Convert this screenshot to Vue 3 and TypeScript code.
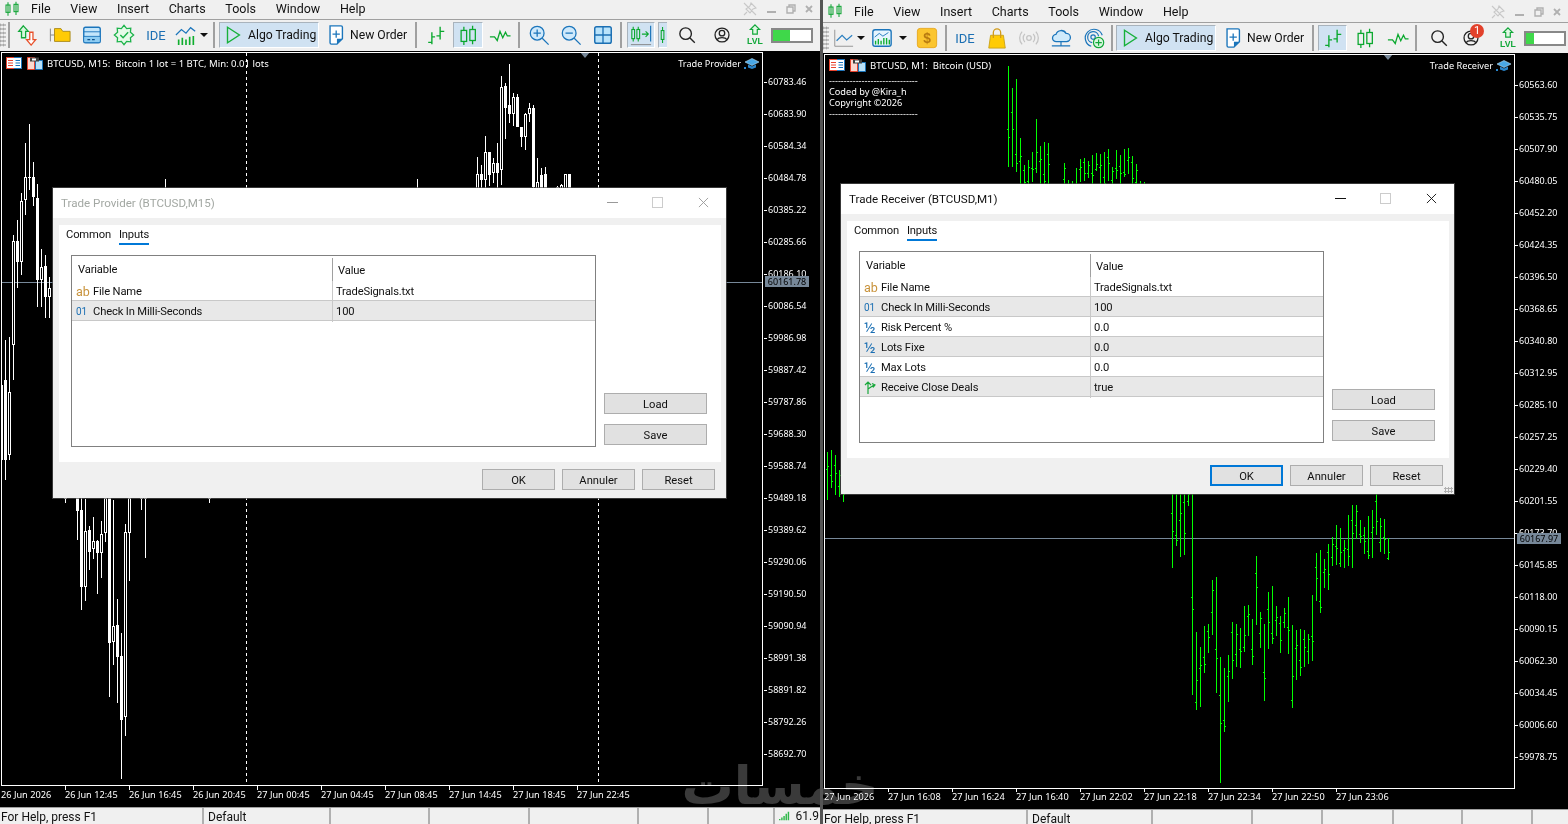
<script setup lang="ts">
type Tool = { k: string; w: number; id?: string; on?: boolean; pct?: number; badge?: boolean };
type Candle = [number, number, number, number, number, number];
type Win = {
  cls: string; title: string; tip: string; ea: string; notes: string[]; tools: Tool[];
  prices: string[]; times: string[]; stat: number[]; dlg: string; rows: string[][]; tag: string;
};

const menus = ['File', 'View', 'Insert', 'Charts', 'Tools', 'Window', 'Help'];

const leftTools: Tool[] = [
  { k: 'grip', w: 6 }, { k: 'sep', w: 5 },
  { k: 'use', id: 'arrows', w: 32 }, { k: 'gap', w: 1 }, { k: 'use', id: 'folder', w: 32 }, { k: 'use', id: 'win', w: 32 },
  { k: 'use', id: 'gear', w: 32 }, { k: 'ide', w: 32 }, { k: 'use', id: 'chart', w: 28 }, { k: 'dd', w: 8 },
  { k: 'sep', w: 11 }, { k: 'algo', w: 100 }, { k: 'gap', w: 6 }, { k: 'order', w: 88 }, { k: 'sep', w: 6 },
  { k: 'use', id: 'bars', w: 34 }, { k: 'use', id: 'candles', w: 30, on: true }, { k: 'use', id: 'line', w: 34 }, { k: 'sep', w: 4 }, { k: 'gap', w: 1 },
  { k: 'use', id: 'zin', w: 33 }, { k: 'use', id: 'zout', w: 32 }, { k: 'use', id: 'grid', w: 32 }, { k: 'sep', w: 4 }, { k: 'gap', w: 4 },
  { k: 'use', id: 'auto', w: 28, on: true }, { k: 'gap', w: 3 }, { k: 'part', w: 9, on: true }, { k: 'gap', w: 4 },
  { k: 'use', id: 'search', w: 32 }, { k: 'gap', w: 3 }, { k: 'use', id: 'user', w: 32 }, { k: 'gap', w: 1 }, { k: 'use', id: 'lvl', w: 32 },
  { k: 'prog', w: 42, pct: 45 },
];
const rightTools: Tool[] = [
  { k: 'grip', w: 6 }, { k: 'use', id: 'lchart', w: 27 }, { k: 'dd', w: 10 }, { k: 'use', id: 'cbox', w: 32 }, { k: 'dd', w: 10 }, { k: 'gap', w: 2 },
  { k: 'use', id: 'dollar', w: 34 }, { k: 'sep', w: 3 }, { k: 'gap', w: 1 }, { k: 'ide', w: 34 }, { k: 'use', id: 'bag', w: 30 }, { k: 'gap', w: 1 },
  { k: 'use', id: 'signal', w: 32 }, { k: 'use', id: 'cloud', w: 32 }, { k: 'use', id: 'network', w: 33 }, { k: 'sep', w: 3 }, { k: 'gap', w: 3 },
  { k: 'algo', w: 100 }, { k: 'gap', w: 6 }, { k: 'order', w: 88 }, { k: 'sep', w: 6 }, { k: 'gap', w: 2 },
  { k: 'use', id: 'bars', w: 29, on: true }, { k: 'gap', w: 1 }, { k: 'use', id: 'candles', w: 34 }, { k: 'use', id: 'line', w: 32 }, { k: 'sep', w: 3 }, { k: 'gap', w: 5 },
  { k: 'use', id: 'search', w: 33 }, { k: 'use', id: 'user', w: 31, badge: true }, { k: 'gap', w: 5 }, { k: 'use', id: 'lvl', w: 33 },
  { k: 'prog', w: 42, pct: 20 },
];

const windows: Win[] = [
  {
    cls: 'w-left', title: 'Trade Provider (BTCUSD,M15)', tip: 'BTCUSD, M15:  Bitcoin 1 lot = 1 BTC, Min: 0.01 lots', ea: 'Trade Provider',
    notes: [], tools: leftTools, tag: '60161.78', dlg: 'd-left',
    prices: ['60783.46', '60683.90', '60584.34', '60484.78', '60385.22', '60285.66', '60186.10', '60086.54', '59986.98', '59887.42', '59787.86', '59688.30', '59588.74', '59489.18', '59389.62', '59290.06', '59190.50', '59090.94', '58991.38', '58891.82', '58792.26', '58692.70'],
    times: ['26 Jun 2026', '26 Jun 12:45', '26 Jun 16:45', '26 Jun 20:45', '27 Jun 00:45', '27 Jun 04:45', '27 Jun 08:45', '27 Jun 14:45', '27 Jun 18:45', '27 Jun 22:45'],
    stat: [204, 127, 99, 100, 109, 70, 66],
    rows: [['ab', 'File Name', 'TradeSignals.txt'], ['01', 'Check In Milli-Seconds', '100']],
  },
  {
    cls: 'w-right', title: 'Trade Receiver (BTCUSD,M1)', tip: 'BTCUSD, M1:  Bitcoin (USD)', ea: 'Trade Receiver',
    notes: ['------------------------------', 'Coded by @Kira_h', 'Copyright ©2026', '------------------------------'], tools: rightTools, tag: '60167.97', dlg: 'd-right',
    prices: ['60563.60', '60535.75', '60507.90', '60480.05', '60452.20', '60424.35', '60396.50', '60368.65', '60340.80', '60312.95', '60285.10', '60257.25', '60229.40', '60201.55', '60173.70', '60145.85', '60118.00', '60090.15', '60062.30', '60034.45', '60006.60', '59978.75'],
    times: ['27 Jun 2026', '27 Jun 16:08', '27 Jun 16:24', '27 Jun 16:40', '27 Jun 22:02', '27 Jun 22:18', '27 Jun 22:34', '27 Jun 22:50', '27 Jun 23:06'],
    stat: [205, 125, 100, 70, 71, 69, 70],
    rows: [['ab', 'File Name', 'TradeSignals.txt'], ['01', 'Check In Milli-Seconds', '100'], ['½', 'Risk Percent %', '0.0'], ['½', 'Lots Fixe', '0.0'], ['½', 'Max Lots', '0.0'], ['→', 'Receive Close Deals', 'true']],
  },
];

const candles: Candle[] = [
  [1, 370, 470, 385, 460, 1], [5, 340, 480, 380, 460, 1], [9, 337, 460, 392, 455, 0], [13, 235, 380, 241, 345, 0], [17, 220, 288, 241, 262, 1],
  [21, 193, 275, 201, 262, 0], [25, 143, 215, 177, 200, 0], [29, 124, 190, 177, 178, 1], [33, 162, 206, 177, 197, 1],
  [37, 184, 307, 198, 280, 1], [41, 249, 307, 267, 280, 0], [45, 255, 318, 266, 297, 1], [49, 277, 318, 288, 297, 0],
  [77, 495, 540, 496, 511, 1], [81, 498, 610, 510, 587, 1], [85, 499, 601, 531, 587, 0], [89, 526, 570, 530, 552, 1],
  [93, 517, 559, 541, 549, 0], [97, 540, 594, 541, 553, 1], [101, 521, 578, 534, 553, 0], [105, 498, 542, 498, 533, 0],
  [109, 498, 697, 498, 643, 1], [113, 500, 665, 626, 642, 0], [117, 599, 703, 625, 657, 1], [121, 633, 779, 656, 720, 1],
  [125, 524, 736, 532, 717, 0], [129, 498, 581, 498, 533, 0], [141, 498, 510, 498, 499, 1], [145, 498, 558, 498, 499, 1], [65, 498, 503, 498, 499, 1], [209, 498, 503, 498, 499, 1],
  [165, 179, 190, 188, 189, 1], [417, 179, 190, 188, 189, 1],
  [477, 157, 190, 174, 189, 0], [481, 165, 190, 174, 180, 1], [485, 136, 190, 152, 180, 0], [489, 152, 186, 152, 175, 1],
  [493, 158, 183, 163, 173, 0], [497, 143, 190, 163, 173, 1], [501, 76, 185, 87, 170, 0], [505, 83, 139, 86, 108, 1],
  [509, 64, 123, 105, 114, 1], [513, 93, 126, 97, 114, 0], [517, 94, 127, 97, 127, 1], [521, 127, 147, 127, 137, 1],
  [525, 113, 150, 114, 137, 0], [529, 103, 122, 108, 114, 0], [533, 105, 190, 108, 187, 1], [537, 158, 190, 182, 189, 0],
  [541, 168, 190, 175, 189, 1], [545, 167, 190, 174, 189, 1], [557, 186, 190, 187, 189, 0], [561, 184, 190, 185, 189, 0], [565, 174, 190, 174, 189, 0], [569, 174, 190, 174, 189, 1],
];

const barsA: [number, number, number][] = [
  [1008, 66, 167], [1012, 88, 167], [1016, 79, 172], [1020, 138, 190], [1024, 165, 190], [1028, 160, 190], [1032, 152, 182], [1036, 119, 173], [1040, 146, 190], [1044, 142, 190], [1048, 143, 190],
  [1064, 163, 190], [1068, 180, 190], [1072, 181, 190], [1076, 168, 190], [1080, 159, 182], [1084, 158, 181], [1088, 161, 178], [1092, 155, 190], [1096, 153, 171], [1100, 154, 190], [1104, 152, 190], [1108, 149, 181], [1112, 167, 190], [1116, 150, 179], [1120, 155, 190], [1124, 149, 177], [1128, 148, 174], [1132, 156, 190], [1136, 164, 190], [1140, 181, 190], [1144, 182, 190],
  [827, 452, 500], [831, 450, 488], [835, 455, 495], [839, 470, 497], [843, 475, 502],
];
const zoomBars: number[][] = [
  [37, 0, 235], [49, 0, 168], [61, 0, 200], [73, 0, 195], [85, 0, 47], [97, 0, 615], [109, 427, 660], [121, 471, 652], [133, 408, 548], [145, 402, 488], [157, 270, 435], [169, 262, 608], [181, 502, 878], [193, 535, 725], [205, 495, 635], [217, 397, 567], [229, 402, 530], [241, 415, 533], [253, 349, 485], [265, 345, 437], [277, 388, 525], [289, 198, 405], [301, 367, 473], [313, 403, 632], [325, 306, 477], [337, 288, 463], [349, 349, 437], [361, 378, 488], [373, 353, 415], [385, 322, 492], [397, 405, 653], [409, 420, 570], [421, 418, 557], [433, 420, 530], [445, 433, 523], [457, 316, 513], [469, 190, 332], [481, 180, 368], [493, 208, 295], [505, 162, 300], [517, 142, 228], [529, 105, 225], [541, 114, 232], [553, 150, 234], [565, 75, 228], [577, 45, 234], [589, 45, 147], [601, 90, 158], [613, 112, 192], [625, 78, 207], [637, 60, 205], [649, 12, 135], [661, 85, 185], [673, 87, 192], [685, 145, 210],
];
const barsAll = [...barsA, ...zoomBars.map(b => [Math.round(1160 + (b[0] - 1) / 3), Math.round(490 + b[1] / 3), Math.round(490 + b[2] / 3)] as [number, number, number])];
const fr = [0.62, 0.3, 0.81, 0.45, 0.18, 0.7, 0.52, 0.9, 0.35, 0.66, 0.24, 0.58];
const bars = barsAll.map((b, i) => ({
  x: b[0], hi: b[1], h: b[2] - b[1],
  o: Math.round(b[1] + (b[2] - b[1]) * fr[i % 12]),
  c: Math.round(b[1] + (b[2] - b[1]) * fr[(i + 5) % 12]),
}));

const gearPts = Array.from({ length: 16 }, (_, i) => {
  const r = i % 2 ? 7.6 : 10.5;
  const a = (i * Math.PI) / 8;
  return `${(12 + r * Math.cos(a)).toFixed(1)},${(12 + r * Math.sin(a)).toFixed(1)}`;
}).join(' ');
</script>

<template>
  <div class="desk">
    <svg class="defs" width="0" height="0" aria-hidden="true">
      <symbol id="logo" viewBox="0 0 24 24"><g fill="none" stroke="#13a538" stroke-width="1.6"><rect x="3" y="6" width="6" height="11"/><path d="M6 2V22"/><rect x="15" y="5" width="6" height="11"/><path d="M18 1V21"/></g></symbol>
      <symbol id="arrows" viewBox="0 0 24 24"><path d="M8 2L13.5 8H10.5V15H6V8H3Z" fill="#d8f6dc" stroke="#12a83a" stroke-width="1.4"/><path d="M15 9H18.5V17H21.5L16.5 23L11.5 17H15Z" fill="#fff" stroke="#e8502a" stroke-width="1.4"/></symbol>
      <symbol id="folder" viewBox="0 0 24 24"><path d="M1.5 5V19M1.5 12H6" stroke="#808080" fill="none"/><path d="M6 5H13L15 8H23V19H6Z" fill="#ffcb05" stroke="#a8891c"/></symbol>
      <symbol id="win" viewBox="0 0 24 24"><rect x="3" y="3.5" width="18" height="17" rx="2" fill="#c4e6fb" stroke="#1b75bb" stroke-width="1.5"/><path d="M3 8.5H21" stroke="#1b75bb"/><rect x="3.8" y="14" width="16.4" height="5.8" fill="#8ecdf3"/><path d="M7 17H10M12 17H15" stroke="#0f4f86" stroke-width="1.2"/><path d="M3 13.5H21" stroke="#1b75bb"/></symbol>
      <symbol id="gear" viewBox="0 0 24 24"><polygon :points="gearPts" fill="#e6fae9" stroke="#1cb34a" stroke-width="1.4"/><path d="M8 12L11 15L16.5 9" fill="none" stroke="#1cb34a" stroke-width="1.6"/></symbol>
      <symbol id="chart" viewBox="0 0 24 24"><path d="M4 23V17M8 23V15M12 23V17M16 23V14M20 23V13" stroke="#0fae2e" stroke-width="1.8"/><path d="M1 12L7 6L12 10L17 4L22 8" stroke="#1b75bb" stroke-width="1.3" fill="none"/></symbol>
      <symbol id="play" viewBox="0 0 24 24"><path d="M6 3.5L19 12L6 20.5Z" fill="none" stroke="#17b13a" stroke-width="1.5"/></symbol>
      <symbol id="doc" viewBox="0 0 24 24"><path d="M5.5 2H17.5Q19 2 19 3.5V16L13 22H7Q5.5 22 5.5 20.5Z" fill="#fff" stroke="#1b75bb" stroke-width="1.5"/><path d="M12.2 7V15M8.2 11H16.2" stroke="#1b75bb" stroke-width="1.4"/><path d="M13 22V16H19Z" fill="#1b75bb"/></symbol>
      <symbol id="bars" viewBox="0 0 24 24"><path d="M7.5 9V22M7.5 14H11M7.5 20H3.5M16.5 3V17M16.5 8H21M16.5 13H12.5" fill="none" stroke="#0aa82e" stroke-width="1.5"/></symbol>
      <symbol id="candles" viewBox="0 0 24 24"><g fill="none" stroke="#0aa82e" stroke-width="1.4"><rect x="4.5" y="7" width="6" height="12"/><path d="M7.5 3V7M7.5 19V23"/><rect x="14" y="6" width="6" height="12"/><path d="M17 2V6M17 18V22"/></g></symbol>
      <symbol id="line" viewBox="0 0 24 24"><path d="M1 14H6L9 18L12 8L15 15L18 9L20 13H23.5" fill="none" stroke="#0aa82e" stroke-width="1.4"/></symbol>
      <symbol id="zin" viewBox="0 0 24 24"><circle cx="10" cy="10" r="7.5" fill="#cfe9fb" stroke="#1b75bb" stroke-width="1.4"/><path d="M15.5 15.5L22.5 22.5M10 6V14M6 10H14" stroke="#1b75bb" stroke-width="1.4"/></symbol>
      <symbol id="zout" viewBox="0 0 24 24"><circle cx="10" cy="10" r="7.5" fill="#cfe9fb" stroke="#1b75bb" stroke-width="1.4"/><path d="M15.5 15.5L22.5 22.5M6 10H14" stroke="#1b75bb" stroke-width="1.4"/></symbol>
      <symbol id="grid" viewBox="0 0 24 24"><rect x="3" y="3" width="18" height="18" rx="2" fill="#b9e3fb" stroke="#1b6fb3" stroke-width="1.6"/><path d="M12 3V21M3 12H21" stroke="#1b6fb3" stroke-width="1.4"/></symbol>
      <symbol id="auto" viewBox="0 0 24 24"><g fill="none" stroke="#0aa82e" stroke-width="1.2"><rect x="2" y="6" width="3" height="10"/><path d="M3.5 3V6M3.5 16V19"/><rect x="7.5" y="6" width="3" height="10"/><path d="M9 3V6M9 16V19"/><path d="M13 11H20M17 8L20 11L17 14"/></g><path d="M22.5 2V19" stroke="#1b75bb" stroke-width="1.3"/><path d="M1 22.5H23" stroke="#808080"/></symbol>
      <symbol id="part" viewBox="0 0 9 24"><g fill="none" stroke="#0aa82e" stroke-width="1.2"><rect x="2.5" y="7" width="3" height="10"/><path d="M4 3V7M4 17V21"/></g></symbol>
      <symbol id="search" viewBox="0 0 24 24"><circle cx="10.5" cy="10.5" r="6.3" fill="none" stroke="#222" stroke-width="1.5"/><path d="M15 15L20.5 20.5" stroke="#222" stroke-width="1.5"/></symbol>
      <symbol id="user" viewBox="0 0 24 24"><g fill="none" stroke="#222" stroke-width="1.4"><circle cx="12" cy="12" r="7.6"/><circle cx="12" cy="10" r="3"/><path d="M6.5 17C8.5 14 15.5 14 17.5 17"/></g></symbol>
      <symbol id="lvl" viewBox="0 0 24 24"><path d="M12 1L17 6H14.5V11H9.5V6H7Z" fill="#e0f8e4" stroke="#12a83a" stroke-width="1.3"/></symbol>
      <symbol id="lchart" viewBox="0 0 24 24"><path d="M3 3V21H23" fill="none" stroke="#909090"/><path d="M5 15L11 9L16 14L22 9" fill="none" stroke="#2a7fc0" stroke-width="1.3"/></symbol>
      <symbol id="cbox" viewBox="0 0 24 24"><rect x="2" y="3" width="20" height="18" rx="2.5" fill="#e6f5fe" stroke="#1b75bb" stroke-width="1.5"/><path d="M5 19V15M8 19V13M11 19V15M14 19V12M17 19V12M20 19V14" stroke="#0fae2e" stroke-width="1.5"/><path d="M4 11L9 7L13 10L19 6" stroke="#1b75bb" fill="none"/></symbol>
      <symbol id="dollar" viewBox="0 0 24 24"><rect x="1.5" y="1.5" width="21" height="21" rx="3" fill="#fbc52f" stroke="#e8a71d"/></symbol>
      <symbol id="bag" viewBox="0 0 24 24"><path d="M5 9H19L21 23H3Z" fill="#ffcb05" stroke="#c9a21a"/><path d="M8 12V6A4 4 0 0 1 16 6V12" fill="none" stroke="#d19a1a" stroke-width="1.4"/></symbol>
      <symbol id="signal" viewBox="0 0 24 24"><g fill="none" stroke="#c4c4c4" stroke-width="1.4"><circle cx="12" cy="12" r="2.5"/><path d="M7.5 7.5A6.5 6.5 0 0 0 7.5 16.5M16.5 7.5A6.5 6.5 0 0 1 16.5 16.5M4.5 5A10.5 10.5 0 0 0 4.5 19M19.5 5A10.5 10.5 0 0 1 19.5 19"/></g></symbol>
      <symbol id="cloud" viewBox="0 0 24 24"><path d="M7 16A4 4 0 0 1 6.5 8A6 6 0 0 1 17.5 7A4.5 4.5 0 0 1 18 16Z" fill="#cfeafb" stroke="#1b75bb" stroke-width="1.4"/><path d="M12 16V20M2 20.5H22" stroke="#1b75bb" stroke-width="1.3"/></symbol>
      <symbol id="network" viewBox="0 0 24 24"><g fill="none" stroke="#1b75bb" stroke-width="1.3"><path d="M9 21A9.5 9.5 0 1 1 21 9"/><path d="M10 17A6 6 0 1 1 17 10"/><circle cx="11" cy="11" r="2.4"/></g><circle cx="17" cy="17" r="5.6" fill="#d9f7df" stroke="#12a83a" stroke-width="1.3"/><path d="M17 13.5V20.5M13.5 17H20.5" stroke="#12a83a" stroke-width="1.3"/></symbol>
      <symbol id="table" viewBox="0 0 16 12"><rect x=".5" y=".5" width="15" height="11" fill="#fff" stroke="#e8432d"/><path d="M8 .5H15.5V11.5H8" fill="none" stroke="#1b75bb"/><path d="M2 3.5H7M2 6H7M2 8.5H7" stroke="#e8432d"/><path d="M9.5 3.5H14M9.5 6H14M9.5 8.5H14" stroke="#1b75bb"/></symbol>
      <symbol id="floppy" viewBox="0 0 16 13"><path d="M.5 .5H7.5V12.5H.5Z" fill="#fbd8d0" stroke="#e8432d"/><path d="M8.5 3.5H15.5V12.5H8.5Z" fill="#b8e0f8" stroke="#1b75bb"/><rect x="3" y=".5" width="9" height="4" fill="#404040"/><rect x="5" y="1.5" width="4" height="2" fill="#fff"/></symbol>
      <symbol id="cap" viewBox="0 0 16 13"><path d="M1 5L8 1.5L15 5L8 8.5Z" fill="#4aa8e6" stroke="#bfe4fb" stroke-width=".6"/><path d="M4 7.5V10.5L8 12L12 10.5V7.5L8 9.5Z" fill="#2a86cc"/><rect x="0" y="10" width="2" height="2" fill="#2a86cc"/></symbol>
      <symbol id="pin" viewBox="0 0 14 14"><path d="M8 1L13 6L10 7L7 11L3 7L7 4ZM4 10L1 13M1 1L13 13" fill="none" stroke="#c8c8c8" stroke-width="1.1"/></symbol>
      <symbol id="restore" viewBox="0 0 10 10"><path d="M1 3H7V9H1ZM3 3V1H9V7H7" fill="none" stroke="#b0b0b0" stroke-width="1.4"/></symbol>
      <symbol id="cross" viewBox="0 0 10 10"><path d="M2 2L8 8M8 2L2 8" stroke="#b0b0b0" stroke-width="1.8"/></symbol>
    </svg>

    <section v-for="w in windows" :key="w.cls" class="mt" :class="w.cls">
      <header class="menu">
        <svg class="mlogo"><use href="#logo" /></svg>
        <span v-for="m in menus" :key="m" class="mi">{{ m }}</span>
        <div class="wctl">
          <svg class="c-pin"><use href="#pin" /></svg>
          <i class="c-min"></i>
          <svg class="c-sm"><use href="#restore" /></svg>
          <svg class="c-sm"><use href="#cross" /></svg>
        </div>
      </header>

      <nav class="tools">
        <div v-for="(t, i) in w.tools" :key="i" class="tc" :class="[t.k, { on: t.on }]" :style="{ width: t.w + 'px' }">
          <template v-if="t.k === 'use'">
            <svg class="ic" viewBox="0 0 24 24">
              <use :href="'#' + t.id" />
              <text v-if="t.id === 'lvl'" x="12" y="21.5" font-size="9.5" font-weight="700" text-anchor="middle" fill="#12a83a" font-family="Liberation Sans">LVL</text>
              <text v-if="t.id === 'dollar'" x="12" y="17.5" font-size="15" font-weight="700" text-anchor="middle" fill="#b87a10" font-family="Liberation Sans">$</text>
            </svg>
            <b v-if="t.badge" class="badge">1</b>
          </template>
          <template v-else-if="t.k === 'part'"><svg class="ip"><use href="#part" /></svg></template>
          <span v-else-if="t.k === 'ide'" class="ide">IDE</span>
          <template v-else-if="t.k === 'algo'"><svg class="ic"><use href="#play" /></svg><span class="tl">Algo Trading</span></template>
          <template v-else-if="t.k === 'order'"><svg class="ic"><use href="#doc" /></svg><span class="tl">New Order</span></template>
          <i v-else-if="t.k === 'dd'" class="tri"></i>
          <div v-else-if="t.k === 'prog'" class="pbar"><span :style="{ width: t.pct + '%' }"></span></div>
        </div>
      </nav>

      <main class="chart">
        <div class="frame">
          <svg v-if="w.cls === 'w-left'" class="plot" viewBox="2 53 760 732" shape-rendering="crispEdges">
            <path d="M246.5 53V785M598.5 53V785" stroke="#fff" stroke-dasharray="3 3" />
            <rect x="2" y="282" width="760" height="1" fill="#778899" />
            <g v-for="c in candles" :key="c[0]">
              <rect :x="c[0]" :y="c[1]" width="1" :height="c[2] - c[1]" fill="#fff" />
              <rect :x="c[0] - 1" :y="c[3]" width="3" :height="c[4] - c[3]" fill="#fff" />
              <rect v-if="!c[5]" :x="c[0]" :y="c[3] + 1" width="1" :height="Math.max(c[4] - c[3] - 2, 0)" fill="#000" />
            </g>
          </svg>
          <svg v-else class="plot" viewBox="825 55 689 733" shape-rendering="crispEdges">
            <rect x="825" y="538" width="689" height="1" fill="#778899" />
            <g v-for="(b, i) in bars" :key="i" fill="#0f0">
              <rect :x="b.x" :y="b.hi" width="1" :height="b.h" />
              <rect :x="b.x - 1" :y="b.o" width="1" height="1" />
              <rect :x="b.x + 1" :y="b.c" width="1" height="1" />
            </g>
          </svg>
          <div class="legend">
            <svg class="lg1"><use href="#table" /></svg>
            <svg class="lg2"><use href="#floppy" /></svg>
            <span class="lt">{{ w.tip }}</span>
          </div>
          <div v-if="w.notes.length" class="notes"><div v-for="(n, i) in w.notes" :key="i">{{ n }}</div></div>
          <div class="ea"><span>{{ w.ea }}</span><svg class="capi"><use href="#cap" /></svg></div>
          <i class="shift"></i>
        </div>
        <div class="prices">
          <div v-for="p in w.prices" :key="p" class="pl">{{ p }}</div>
          <div class="ptag">{{ w.tag }}</div>
        </div>
        <div class="times"><div v-for="t in w.times" :key="t" class="tm">{{ t }}</div></div>
      </main>

      <footer class="status">
        <div v-for="(s, i) in w.stat" :key="i" class="st" :style="{ width: s + 'px' }">
          <template v-if="i === 0">For Help, press F1</template>
          <template v-else-if="i === 1">Default</template>
        </div>
        <div v-if="w.cls === 'w-left'" class="st net">
          <svg width="16" height="14" viewBox="0 0 16 14"><path d="M1 13V11M4 13V9M7 13V7M10 13V4M13 13V1" stroke="#2fb84a" stroke-width="2" /></svg>
          <span>61.9</span>
        </div>
      </footer>

      <div class="dlg" :class="w.dlg">
        <div class="dt">
          <span class="dtt">{{ w.title }}</span>
          <i class="bmin"></i><i class="bmax"></i>
          <svg class="bx" viewBox="0 0 12 12"><path d="M1 1L11 11M11 1L1 11" /></svg>
        </div>
        <div class="db">
          <div class="pane">
            <div class="tabs"><span>Common</span><span class="tab-on">Inputs</span></div>
            <div class="mid">
              <div class="tbl">
                <div class="tr th"><div class="c1">Variable</div><div class="c2">Value</div></div>
                <div v-for="(r, i) in w.rows" :key="r[1]" class="tr" :class="{ alt: i % 2 === 1 }">
                  <div class="c1">
                    <span class="ri" :class="r[0] === 'ab' ? 'ab' : r[0] === '01' ? 'n01' : 'frac'">
                      <svg v-if="r[0] === '→'" width="15" height="15" viewBox="0 0 15 15"><path d="M4 14V2M1 5L4 2L7 5M4 9L10 5M8 3.5L11 5L9 7.5" fill="none" stroke="#1aa83c" stroke-width="1.2" /></svg>
                      <template v-else>{{ r[0] }}</template>
                    </span>
                    <span>{{ r[1] }}</span>
                  </div>
                  <div class="c2">{{ r[2] }}</div>
                </div>
              </div>
              <div class="side"><button>Load</button><button>Save</button></div>
            </div>
          </div>
          <div class="acts"><button class="ok">OK</button><button>Annuler</button><button>Reset</button></div>
        </div>
        <i class="grip-r"></i>
      </div>
    </section>

    <div class="mark"><span>خمسات</span></div>
    <i class="divider"></i>
  </div>
</template>

<style>
html, body { margin: 0; background: #000; overflow: hidden; }
</style>

<style scoped>
.desk { position: relative; width: 1568px; height: 824px; overflow: hidden; background: #f0f0f0; font-family: Roboto, "Noto Sans", sans-serif; font-size: 12px; color: #111; }
.defs { position: absolute; }
.mt { position: absolute; top: 0; height: 824px; display: flex; flex-direction: column; background: #f0f0f0; }
.w-left { left: 0; width: 820px; }
.w-right { left: 823px; width: 745px; }

.menu { display: flex; align-items: center; gap: 19.7px; flex: none; box-sizing: border-box; border-bottom: 1px solid #a0a0a0; }
.w-left .menu { height: 20px; padding-bottom: 2px; }
.w-right .menu { height: 23px; padding-top: 1px; }
.mlogo { position: absolute; width: 16px; height: 16px; top: 1px; left: 4px; }
.w-right .mlogo { top: 3px; }
.mi { font-size: 12.5px; line-height: 16px; }
.mi:first-of-type { margin-left: 31px; }
.wctl { margin-left: auto; display: flex; align-items: center; gap: 8px; padding-right: 6px; }
.c-pin { width: 14px; height: 14px; }
.c-min { width: 9px; height: 2px; background: #b0b0b0; margin: 6px 2px 0; }
.c-sm { width: 10px; height: 10px; }

.tools { display: flex; align-items: center; flex: none; height: 30px; overflow: hidden; }
.tc { flex: none; height: 26px; display: flex; align-items: center; justify-content: center; position: relative; box-sizing: border-box; }
.ic { width: 22px; height: 22px; flex: none; }
.ip { width: 9px; height: 24px; }
.on, .algo { background: #d0e2f2; border-top: 1px solid #a9b3bc; border-left: 1px solid #a9b3bc; border-right: 1px solid #fff; border-bottom: 1px solid #fff; }
.part { border-right: 0; justify-content: flex-start; }
.sep::after { content: ""; width: 2px; height: 26px; background: #a0a0a0; }
.grip { background-image: radial-gradient(#a8a8a8 1px, transparent 1.2px); background-size: 3px 4px; background-position: 2px 0; height: 24px; }
.ide { color: #1b6fb3; font-size: 13px; }
.tl { font-size: 12.2px; white-space: nowrap; }
.algo { justify-content: flex-start; padding-left: 2px; gap: 4px; }
.order { justify-content: flex-start; gap: 3px; }
.tri { width: 0; height: 0; border-left: 4px solid transparent; border-right: 4px solid transparent; border-top: 4px solid #111; }
.pbar { width: 42px; height: 15px; box-sizing: border-box; border: 2px solid #888; background: #fff; display: flex; }
.pbar span { background: #3fd84a; display: block; }
.badge { position: absolute; top: -1px; right: 2px; width: 14px; height: 14px; border-radius: 50%; background: #e2412b; color: #fff; font: 400 11px/14px Roboto, sans-serif; text-align: center; }

.chart { flex: 1; min-height: 0; background: #000; display: grid; position: relative; color: #fff; font-family: "Noto Sans", sans-serif; font-size: 9.2px; }
.w-left .chart { margin-top: 1px; grid-template-columns: 763px 1fr; grid-template-rows: 735px 1fr; padding-left: 1px; padding-top: 1px; }
.w-right .chart { grid-template-columns: 691px 1fr; grid-template-rows: 735px 1fr; padding-left: 1px; padding-top: 1px; }
.frame { position: relative; border: 1px solid #fff; box-sizing: border-box; overflow: hidden; }
.w-left .frame { width: 762px; height: 734px; }
.w-right .frame { width: 691px; height: 735px; }
.plot { position: absolute; inset: 0; width: 100%; height: 100%; display: block; }
.legend { position: absolute; left: 4px; top: 3px; display: flex; align-items: center; white-space: pre; height: 14px; font-size: 9.55px; }
.lg1 { width: 16px; height: 12px; }
.lg2 { width: 16px; height: 13px; margin-left: 5px; }
.lt { margin-left: 4px; }
.notes { position: absolute; left: 4px; top: 20px; line-height: 11px; }
.ea { position: absolute; right: 2px; top: 3px; display: flex; align-items: center; gap: 3px; height: 14px; }
.capi { width: 16px; height: 13px; }
.shift { position: absolute; top: -1px; width: 0; height: 0; border-left: 5px solid transparent; border-right: 5px solid transparent; border-top: 6px solid #778899; }
.w-left .shift { left: 578px; }
.w-right .shift { left: 558px; }

.prices { display: flex; flex-direction: column; position: relative; font-size: 9px; padding-top: 14px; }
.w-right .prices { padding-top: 15px; }
.pl { height: 32px; line-height: 32px; display: flex; align-items: center; flex: none; }
.pl::before { content: ""; width: 3px; height: 1px; background: #fff; margin-right: 1px; }
.ptag { position: absolute; left: 1px; width: 44px; height: 11px; line-height: 11px; background: #778899; color: #000; text-align: center; }
.w-left .ptag { top: 224px; }
.w-right .ptag { top: 479px; left: 2px; }

.times { grid-column: 1 / 3; display: flex; height: 20px; align-items: flex-start; }
.tm { width: 64px; flex: none; position: relative; padding-top: 1px; white-space: nowrap; }
.tm::before { content: ""; position: absolute; left: 0; top: -1px; width: 1px; height: 4px; background: #fff; }
.tm:first-child::before { display: none; }

.status { flex: none; display: flex; background: #f0f0f0; border-top: 1px solid #a0a0a0; overflow: hidden; box-sizing: border-box; font-size: 12px; }
.w-left .status { height: 17px; }
.w-right .status { height: 15px; }
.st { box-sizing: border-box; flex: none; border-right: 2px solid #b0b0b0; padding-left: 1px; line-height: 18px; height: 100%; white-space: nowrap; }
.st:nth-child(2) { padding-left: 4px; }
.w-right .status .st { line-height: 19px; }
.net { border: 0; display: flex; align-items: center; gap: 5px; padding-left: 4px; width: 44px; }

.dlg { position: absolute; width: 673px; height: 310px; display: flex; flex-direction: column; background: #f0f0f0; box-shadow: 0 0 0 1px rgba(80, 80, 80, .7); color: #111; font-size: 11.2px; letter-spacing: -.15px; }
.d-left { left: 53px; top: 188px; }
.d-right { left: 18px; top: 184px; width: 613px; }
.dt { height: 30px; flex: none; background: #fff; display: flex; align-items: center; padding: 0 0 1px 8px; box-sizing: border-box; position: relative; }
.dtt { font-size: 11.6px; flex: 1; letter-spacing: 0; }
.d-left .dtt { color: #a3a8a3; }
.bmin { width: 11px; height: 1px; background: #999; margin-right: 34px; }
.bmax { width: 9px; height: 9px; border: 1px solid #ccc; margin-right: 35px; }
.bx { width: 11px; height: 11px; margin-right: 17px; fill: none; stroke: #999; }
.d-right .bmin { background: #111; }
.d-right .bx { stroke: #111; }
.db { flex: 1; padding: 7px 5px 0 6px; display: flex; flex-direction: column; min-height: 0; }
.pane { background: #fff; height: 237px; flex: none; padding: 0 0 0 12px; box-sizing: border-box; }
.tabs { display: flex; gap: 8px; height: 30px; margin-left: -5px; line-height: 20px; }
.tabs span { height: 18px; }
.tab-on { border-bottom: 2px solid #0078d7; }
.mid { display: flex; gap: 8px; }
.tbl { border: 1px solid #808080; box-sizing: border-box; height: 192px; padding-top: 1px; }
.d-left .tbl { width: 525px; }
.d-right .tbl { width: 465px; }
.tr { display: grid; height: 20px; align-items: center; box-sizing: border-box; border-bottom: 1px solid #c8c8c8; }
.d-left .tr { grid-template-columns: 260px 1fr; }
.d-right .tr { grid-template-columns: 230px 1fr; }
.tr.th { height: 24px; border-bottom: 0; }
.th .c1 { padding-left: 6px; line-height: 26px; }
.tr.th .c2 { padding-left: 5px; border-left: 1px solid #a0a0a0; height: 24px; line-height: 26px; }
.alt { background: #e8e8e8; }
.c1 { display: flex; align-items: center; padding-left: 4px; white-space: nowrap; }
.c2 { padding-left: 3px; border-left: 1px solid #c8c8c8; height: 100%; line-height: 21px; }
.ri { width: 17px; flex: none; display: flex; align-items: center; }
.ab { color: #c8923a; font-size: 12.5px; }
.n01 { color: #1b6fb3; font-size: 10px; }
.frac { color: #1b6fb3; font-size: 15px; }
.side { display: flex; flex-direction: column; gap: 10px; margin-top: 138px; }
button { appearance: none; background: #e1e1e1; border: 1px solid #adadad; width: 103px; height: 21px; padding: 1px 0 0; font: inherit; color: #111; }
.acts { display: flex; justify-content: flex-end; gap: 7px; padding: 7px 6px 0 0; }
.acts button { width: 73px; }
.d-right .ok { border: 2px solid #0078d7; }
.grip-r { position: absolute; right: 1px; bottom: 1px; width: 9px; height: 6px; display: none; }
.d-right .grip-r { display: block; background-image: radial-gradient(#b0b0b0 1px, transparent 1.2px); background-size: 3px 3px; }

.mark { position: absolute; left: 660px; top: 767px; width: 240px; height: 39px; mix-blend-mode: lighten; direction: rtl; text-align: center; line-height: 39px; }
.mark span { font: 700 52px/39px "DejaVu Sans", sans-serif; color: #3a3a3a; }
.divider { position: absolute; left: 820px; top: 0; width: 3px; height: 824px; background: #555; }
</style>
